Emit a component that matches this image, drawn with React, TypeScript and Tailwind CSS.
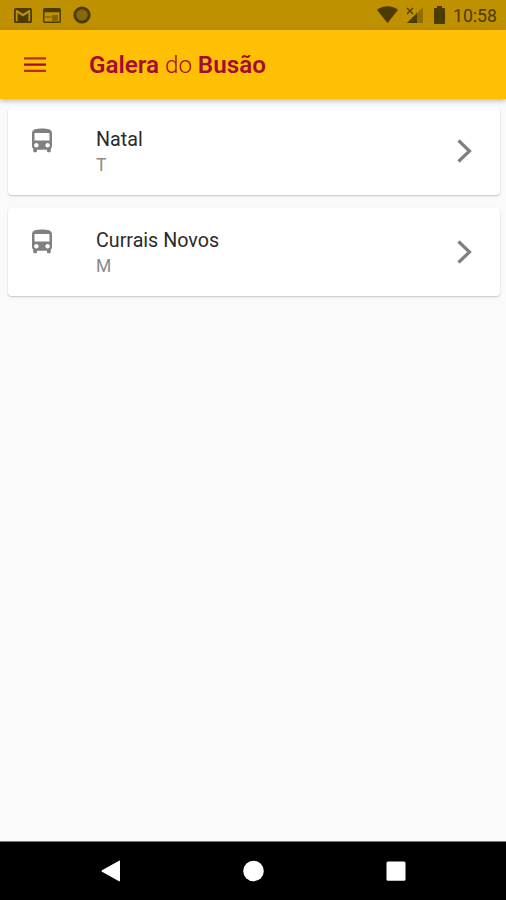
import { ReactNode } from 'react';

interface Route {
  id: number;
  city: string;
  shift: string;
}

const routes: Route[] = [
  { id: 1, city: 'Natal', shift: 'T' },
  { id: 2, city: 'Currais Novos', shift: 'M' },
];

function StatusBar() {
  return (
    <div className="flex h-[30px] shrink-0 items-center justify-between bg-[#bf9000] pr-[9px] pl-[14px] text-[#4c3b03]">
      <div className="flex items-center gap-[11px]">
        <svg className="h-[15px] w-[18px]" viewBox="2 4 20 16" preserveAspectRatio="none" fill="currentColor">
          <path d="M20 4H4c-1.100 0-2 .9-2 2v12c0 1.100.9 2 2 2h16c1.100 0 2-.9 2-2V6c0-1.100-.9-2-2-2zm0 14h-2V9.250L12 13 6 9.250V18H4V6h1.200l6.800 4.250L18.800 6H20v12z" />
        </svg>
        <svg className="h-[15px] w-[18px]" viewBox="0 0 18 15" fill="none" stroke="currentColor">
          <rect x="0.75" y="0.75" width="16.5" height="13.5" rx="1" strokeWidth="1.5" />
          <path d="M1 2.500h16" strokeWidth="3.500" />
          <path d="M2 9h6.500" strokeWidth="1.200" strokeOpacity="0.6" />
          <path d="M9 10h6" strokeWidth="6" strokeOpacity="0.5" />
        </svg>
        <svg className="ml-px h-[18px] w-[18px]" viewBox="0 0 18 18">
          <circle cx="9" cy="9" r="7.2" fill="#876806" stroke="currentColor" strokeWidth="2.800" />
        </svg>
      </div>
      <div className="flex items-center">
        <svg className="h-[17px] w-[21px]" viewBox="0 0 21 17" fill="currentColor">
          <path d="M0 4C6-.9 15-.9 21 4L10.500 17z" />
        </svg>
        <svg className="ml-[8px] h-[17px] w-[18px]" viewBox="0 0 18 17" fill="currentColor">
          <path d="M17 1v16H1z" fillOpacity="0.4" />
          <path d="M11 7v10H1z" />
          <path d="M1 2l6 6M7 2L1 8" stroke="currentColor" strokeWidth="1.3" />
        </svg>
        <svg className="ml-[10px] h-[18px] w-[11px]" viewBox="0 0 11 18" fill="currentColor">
          <path d="M3 0h5v2h2a1 1 0 0 1 1 1v14a1 1 0 0 1-1 1H1a1 1 0 0 1-1-1V3a1 1 0 0 1 1-1h2z" />
        </svg>
        <span className="ml-[8px] pt-[3px] text-[17.7px] leading-none">10:58</span>
      </div>
    </div>
  );
}

function Header() {
  return (
    <header className="z-10 flex h-[69px] shrink-0 items-center bg-[#ffc003] pl-6 text-[#a30d33] shadow-[0_2px_5px_rgba(0,0,0,0.25)]">
      <button type="button" aria-label="Menu">
        <svg className="h-4 w-[22px]" viewBox="0 0 22 16" stroke="currentColor" strokeWidth="2.300">
          <path d="M0 1.300h22M0 13.900h22" strokeOpacity="0.82" />
          <path d="M0 7.600h22" />
        </svg>
      </button>
      <h1 className="ml-[43px] pt-px text-[24.2px] font-light whitespace-nowrap">
        <b className="font-semibold">Galera</b> do <b className="font-semibold">Busão</b>
      </h1>
    </header>
  );
}

function BusIcon() {
  return (
    <svg className="h-[30px] w-[30px]" viewBox="0 0 24 24" fill="#808080">
      <path d="M4 16c0 .88.39 1.670 1 2.220V20c0 .55.45 1 1 1h1c.55 0 1-.45 1-1v-1h8v1c0 .55.45 1 1 1h1c.55 0 1-.45 1-1v-1.780c.61-.55 1-1.340 1-2.220V6c0-3.500-3.580-4-8-4s-8 .5-8 4v10zm3.500 1.200c-1 0-1.800-.8-1.800-1.800s.8-1.800 1.800-1.800 1.800.8 1.800 1.800-.8 1.800-1.800 1.800zm9 0c-1 0-1.800-.8-1.800-1.800s.8-1.800 1.800-1.800 1.800.8 1.800 1.800-.8 1.800-1.800 1.800zm1.500-5.700H6V5.500h12v6z" />
    </svg>
  );
}

function RouteCard({ route }: { route: Route }) {
  return (
    <li className="flex h-[88px] rounded-[4px] bg-white pr-7 pl-[19px] shadow-[0_1px_2px_rgba(0,0,0,0.22)]">
      <div className="pt-[19px]">
        <BusIcon />
      </div>
      <div className="ml-[39px] flex-1 pt-[20px]">
        <h2 className="text-[19.7px] leading-[25px] text-[#2b2b2b]">{route.city}</h2>
        <p className="pt-px text-[17.5px] leading-[25px] text-[#8a8a8a]">{route.shift}</p>
      </div>
      <svg className="h-6 w-[15px] self-center" viewBox="0 0 15 24" fill="none" stroke="#808080" strokeWidth="3.200">
        <path d="M1.500 1.500L12.500 12l-11 10.500" />
      </svg>
    </li>
  );
}

function NavButton({ label, children }: { label: string; children: ReactNode }) {
  return (
    <button type="button" aria-label={label} className="flex w-[142px] justify-center">
      <svg className="h-[22px] w-[22px]" viewBox="0 0 22 22" fill="#fff">
        {children}
      </svg>
    </button>
  );
}

export default function App() {
  return (
    <div className="flex h-[900px] w-[506px] flex-col overflow-hidden bg-[#fafafa] font-[Roboto,sans-serif]">
      <StatusBar />
      <Header />

      {/* Lista de rotas */}
      <ul className="flex flex-1 flex-col gap-[13px] pt-2 pr-[6px] pl-2">
        {routes.map((route) => (
          <RouteCard key={route.id} route={route} />
        ))}
      </ul>

      <nav className="flex h-[59px] shrink-0 items-center justify-center border-t border-[#777] bg-black">
        <NavButton label="Voltar">
          <path d="M2 10.200L19 .7q1-.5 1 .6v19.400q0 1.100-1 .6L2 11.800q-1.300-.8 0-1.600z" />
        </NavButton>
        <NavButton label="Início">
          <circle cx="11.500" cy="11" r="10.300" />
        </NavButton>
        <NavButton label="Recentes">
          <rect x="2.500" y="1.500" width="19" height="19.200" rx="1.500" />
        </NavButton>
      </nav>
    </div>
  );
}
